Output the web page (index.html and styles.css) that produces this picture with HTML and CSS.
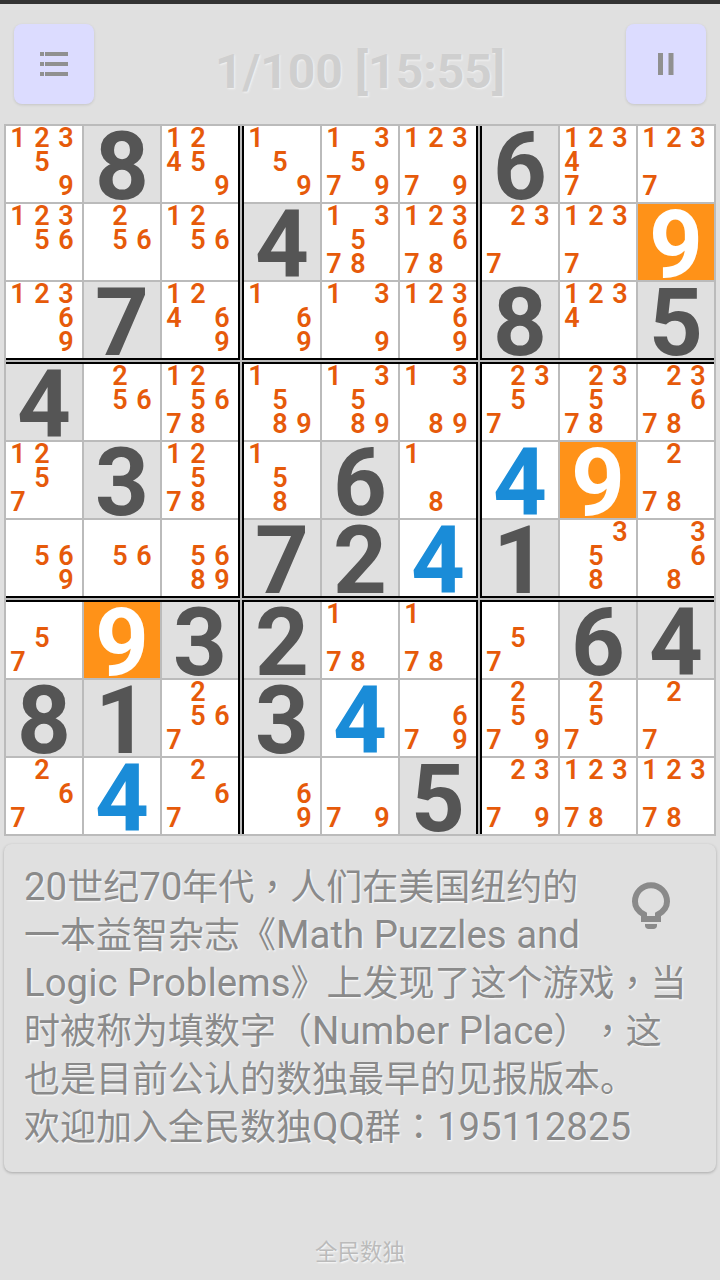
FILE: index.html
```html
<!DOCTYPE html>
<html lang="zh-CN">
<head>
  <meta charset="UTF-8">
  <title>全民数独</title>
  <link rel="stylesheet" href="styles.css">
</head>
<body>

  <div class="status-bar"></div>

  <div class="top-bar">
    <button type="button" class="icon-btn">
      <svg width="28" height="24" viewBox="0 0 28 24"><path d="M0 0h4v4H0zM5 0h23v4H5zM0 10h4v4H0zM5 10h23v4H5zM0 20h4v4H0zM5 20h23v4H5z"/></svg>
    </button>
    <div class="timer">1/100 [15:55]</div>
    <button type="button" class="icon-btn">
      <svg width="16" height="22" viewBox="0 0 16 22"><path d="M0 0h5v22H0zM10.500 0h5v22h-5z"/></svg>
    </button>
  </div>

  <div class="board" id="board"></div>

  <div class="tip-card">
    <svg class="tip-icon" width="38" height="48" viewBox="0 0 38 48">
      <path class="bulb" d="M12 37v-4.500C6.500 29.500 3 24.800 3 19.500 3 10.500 10 3.200 19 3.200s16 7.300 16 16.300c0 5.300-3.500 10-9 13V37z"/>
      <path class="bulb-base" d="M13 42h12v1.500c0 2-1.500 3.500-3.500 3.500h-5c-2 0-3.500-1.500-3.500-3.500z"/>
    </svg>
    <span class="latin">20</span>世纪<span class="latin">70</span>年代<span class="punct" lang="zh-TW">，</span>人们在美国纽约的一本益智杂志《<span class="latin">Math Puzzles and Logic Problems</span>》上发现了这个游戏<span class="punct" lang="zh-TW">，</span>当时被称为填数字<span class="punct" lang="zh-TW">（</span><span class="latin">Number Place</span><span class="punct" lang="zh-TW">）</span><span class="punct" lang="zh-TW">，</span>这也是目前公认的数独最早的见报版本。<br>欢迎加入全民数独<span class="latin">QQ</span>群<span class="punct" lang="zh-TW">：</span><span class="latin">195112825</span>
  </div>

  <div class="footer">全民数独</div>

  <script src="script.js"></script>

</body>
</html>
```

FILE: styles.css
```css
* {
  box-sizing: border-box;
}

body {
  margin: 0;
  height: 1280px;
  overflow: hidden;
  background-color: #e0e0e0;
  font-family: Roboto, "Noto Sans CJK SC", sans-serif;
}

.status-bar {
  height: 4px;
  background-color: #333;
}

.top-bar {
  display: flex;
  justify-content: space-between;
  align-items: center;
  padding: 20px 14px;
}

.icon-btn {
  display: flex;
  justify-content: center;
  align-items: center;
  width: 80px;
  height: 80px;
  padding: 0;
  border: none;
  border-radius: 8px;
  background-color: #dcdcff;
  box-shadow: 0 1px 3px rgba(0, 0, 0, 0.12);
}

.icon-btn svg {
  fill: #909090;
}

.timer {
  margin-top: 14px;
  font-size: 48px;
  font-weight: 700;
  color: #cfcfcf;
  text-shadow: 1px 1px 2px #f4f4f4;
}

/* 3 x 3 boxes, the gap between them is the middle of the double line */
.board {
  display: grid;
  grid-template-columns: repeat(3, auto);
  gap: 2px;
  width: 712px;
  margin-left: 4px;
  padding: 2px;
  background-color: #bbb;
}

.box {
  display: grid;
  grid-template-columns: repeat(3, 76px);
  grid-template-rows: repeat(3, 76px);
  gap: 2px;
  background-color: #bbb;
  border: 0 solid #000;
}

.box:nth-child(3n+1), .box:nth-child(3n+2) {
  border-right-width: 2px;
}

.box:nth-child(3n+2), .box:nth-child(3n) {
  border-left-width: 2px;
}

.box:nth-child(n+4) {
  border-top-width: 2px;
}

.box:nth-child(-n+6) {
  border-bottom-width: 2px;
}

.cell {
  background-color: #fff;
  text-align: center;
  font-size: 94px;
  font-weight: 700;
  line-height: 82px;
  color: #555;
}

.cell.given {
  background-color: #e0e0e0;
}

.cell.entered {
  color: #1a8cd8;
}

.cell.selected {
  background-color: #ff9218;
  color: #fff;
}

.notes {
  display: grid;
  grid-template-columns: repeat(3, 24px);
  grid-template-rows: repeat(3, 24px);
}

.notes span {
  font-size: 27px;
  font-weight: 600;
  line-height: 24px;
  color: #e65a0a;
}

.tip-card {
  margin: 8px 4px 0 4px;
  height: 328px;
  padding: 20px 20px 0 20px;
  border-radius: 8px;
  background-color: #e0e0e0;
  box-shadow: 0 1px 3px rgba(0, 0, 0, 0.25);
  font-size: 36px;
  line-height: 48px;
  color: #8a8a8a;
  text-shadow: 1px 1px 2px #fff;
  text-spacing-trim: space-all;
}

.latin {
  font-size: 38.4px;
  line-height: 0;
}

.punct {
  font-family: "Noto Sans CJK TC", sans-serif;
  line-height: 0;
}

.tip-icon {
  float: right;
  width: 38px;
  height: 48px;
  margin: 18px 26px 0 40px;
}

.bulb {
  fill: none;
  stroke: #8a8a8a;
  stroke-width: 6;
}

.bulb-base {
  fill: #8a8a8a;
}

.footer {
  margin-top: 65px;
  text-align: center;
  font-size: 22.5px;
  line-height: 30px;
  color: #bbb;
  text-shadow: 1px 1px 2px #fff;
}
```

FILE: script.js
```js
// row by row: a string is pencil marks, "g" given, "e" entered, "s" selected
const rows = [
  ["12359", "g8", "12459", "159", "13579", "12379", "g6", "12347", "1237"],
  ["12356", "256", "1256", "g4", "13578", "123678", "237", "1237", "s9"],
  ["12369", "g7", "12469", "169", "139", "12369", "g8", "1234", "g5"],
  ["g4", "256", "125678", "1589", "13589", "1389", "2357", "23578", "23678"],
  ["1257", "g3", "12578", "158", "g6", "18", "e4", "s9", "278"],
  ["569", "56", "5689", "g7", "g2", "e4", "g1", "358", "368"],
  ["57", "s9", "g3", "g2", "178", "178", "57", "g6", "g4"],
  ["g8", "g1", "2567", "g3", "e4", "679", "2579", "257", "27"],
  ["267", "e4", "267", "69", "79", "g5", "2379", "12378", "12378"]
];

const kinds = { g: "given", e: "entered", s: "selected" };

function makeCell(value) {
  const cell = document.createElement("div");
  cell.className = "cell";

  if (kinds[value[0]]) {
    cell.classList.add(kinds[value[0]]);
    cell.textContent = value[1];
    return cell;
  }

  cell.classList.add("notes");
  for (let n = 1; n <= 9; n++) {
    const mark = document.createElement("span");
    mark.textContent = value.includes(n) ? n : "";
    cell.appendChild(mark);
  }
  return cell;
}

const board = document.getElementById("board");

for (let b = 0; b < 9; b++) {
  const box = document.createElement("div");
  box.className = "box";
  const top = Math.floor(b / 3) * 3;
  const left = (b % 3) * 3;
  for (let r = top; r < top + 3; r++) {
    for (let c = left; c < left + 3; c++) {
      box.appendChild(makeCell(rows[r][c]));
    }
  }
  board.appendChild(box);
}
```
